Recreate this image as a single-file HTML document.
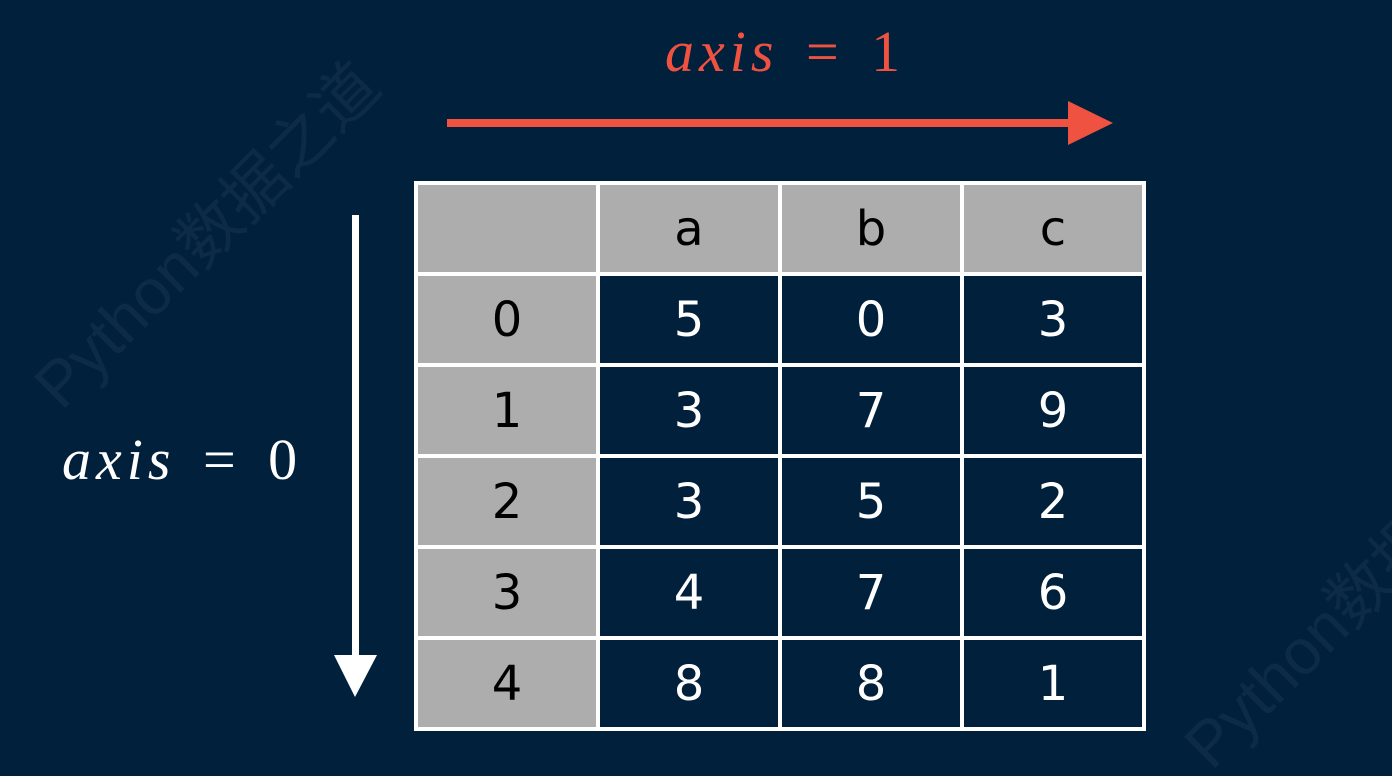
<!DOCTYPE html>
<html><head><meta charset="utf-8"><style>
html,body{margin:0;width:1392px;height:776px;overflow:hidden}
body{background:#01203c;position:relative;font-family:"Liberation Sans","Noto Sans CJK SC",sans-serif}
.wm{position:absolute;color:rgba(255,255,255,0.05);font-size:64px;transform:rotate(-45deg);transform-origin:left top;white-space:nowrap}
.grid{position:absolute;left:414px;top:181px;width:724px;height:542px;padding:4px;background:#fff;display:grid;grid-template-columns:repeat(4,178px);grid-template-rows:repeat(6,87px);gap:4px}
.grid div{background:#01203c;color:#fff;font-family:"DejaVu Sans",sans-serif;font-size:48px;display:flex;align-items:center;justify-content:center}
.grid div.g{background:#adadad;color:#000}
.m{position:absolute;font-family:"Liberation Serif",serif;font-style:italic;font-size:58px;white-space:nowrap;letter-spacing:5px;word-spacing:8px;line-height:64px}
.m span{font-style:normal}
</style></head><body>
<div class="wm" style="left:10px;top:360px">Python数据之道</div>
<div class="wm" style="left:1160px;top:720px">Python数据之道</div>
<div class="m" style="left:665px;top:20px;color:#ef5241">axis <span>=</span> <span>1</span></div>
<div class="m" style="left:62px;top:428px;color:#fff">axis <span>=</span> <span>0</span></div>
<svg style="position:absolute;left:0;top:0" width="1392" height="776">
<rect x="447" y="119" width="625" height="8" fill="#ef5241"/>
<polygon points="1068,101 1113,123 1068,145" fill="#ef5241"/>
<rect x="352" y="215" width="7" height="445" fill="#fff"/>
<polygon points="334,655 377,655 355,697" fill="#fff"/>
</svg>
<div class="grid">
<div class="g"></div><div class="g">a</div><div class="g">b</div><div class="g">c</div>
<div class="g">0</div><div>5</div><div>0</div><div>3</div>
<div class="g">1</div><div>3</div><div>7</div><div>9</div>
<div class="g">2</div><div>3</div><div>5</div><div>2</div>
<div class="g">3</div><div>4</div><div>7</div><div>6</div>
<div class="g">4</div><div>8</div><div>8</div><div>1</div>
</div>
</body></html>
